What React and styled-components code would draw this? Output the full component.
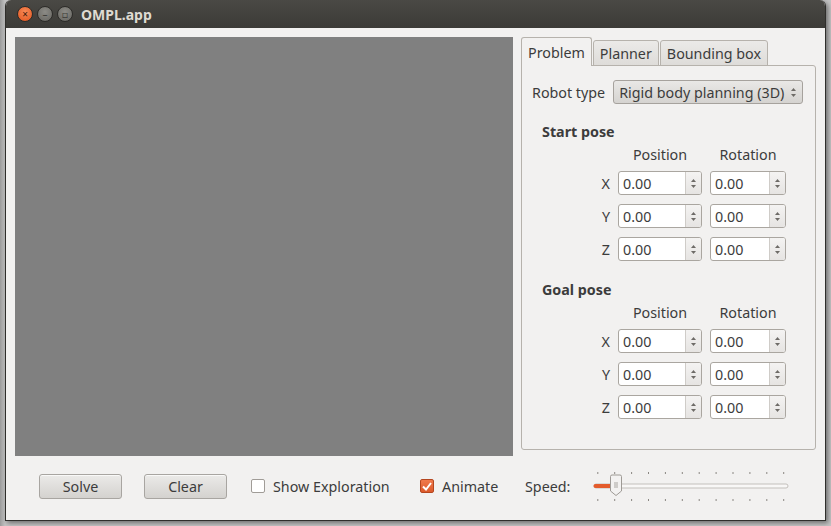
import React from 'react';
import styled, { createGlobalStyle } from 'styled-components';

const Global = createGlobalStyle`
  html, body {
    margin: 0;
    padding: 0;
    background: #b9b9b9;
    font-family: "Noto Sans", "DejaVu Sans", sans-serif;
  }
`;

const Screen = styled.div`
  width: 831px;
  height: 526px;
  overflow: hidden;
  background: linear-gradient(90deg, #9a9a9a 0px, #c4c4c4 5px);
`;

const Window = styled.div`
  margin-left: 5px;
  width: 821px;
  height: 521px;
  box-sizing: border-box;
  display: flex;
  flex-direction: column;
  background: #f2f1f0;
  border: 1px solid #2f2e2b;
  border-top: none;
  border-radius: 6px 6px 0 0;
  box-shadow: 2px 2px 5px rgba(0, 0, 0, 0.45);
  overflow: hidden;
`;

const TitleBar = styled.div`
  height: 28px;
  flex: none;
  display: flex;
  align-items: center;
  padding-left: 11px;
  background: linear-gradient(#4a4945, #3c3b37);
`;

const WinButton = styled.span`
  width: 14px;
  height: 14px;
  border-radius: 50%;
  margin-right: 4px;
  display: flex;
  align-items: center;
  justify-content: center;
  font-size: 10px;
  line-height: 1;
  color: ${(p) => (p.$close ? '#3c1a0a' : '#3c3b37')};
  background: ${(p) =>
    p.$close
      ? 'radial-gradient(circle at 50% 35%, #f78a57, #e2541d)'
      : 'radial-gradient(circle at 50% 35%, #8c8b86, #65645f)'};
  border: 1px solid #2d2c29;
`;

const WinTitle = styled.span`
  margin-left: 4px;
  color: #dfdbd2;
  font-weight: bold;
  font-size: 14px;
`;

const Body = styled.div`
  flex: 1;
  display: flex;
  flex-direction: column;
  padding: 9px 9px 0 9px;
`;

const MainRow = styled.div`
  display: flex;
  gap: 8px;
`;

const Viewport = styled.div`
  width: 498px;
  height: 419px;
  background: #808080;
`;

const TabWidget = styled.div`
  width: 295px;
  display: flex;
  flex-direction: column;
`;

const TabBar = styled.div`
  display: flex;
  align-items: flex-end;
  height: 29px;
  position: relative;
  z-index: 1;
`;

const Tab = styled.div`
  box-sizing: border-box;
  height: ${(p) => (p.$active ? '29px' : '26px')};
  padding: 0 6px;
  margin-right: 1px;
  display: flex;
  align-items: center;
  font-size: 14.3px;
  color: #3c3c3c;
  border: 1px solid #b6b2ac;
  border-bottom: ${(p) => (p.$active ? 'none' : '1px solid #b6b2ac')};
  border-radius: 3px 3px 0 0;
  background: ${(p) => (p.$active ? '#f2f1f0' : 'linear-gradient(#ebeae8, #dedcd9)')};
`;

const Panel = styled.div`
  box-sizing: border-box;
  height: 385px;
  margin-top: -1px;
  border: 1px solid #b6b2ac;
  border-radius: 0 3px 3px 3px;
  background: #f2f1f0;
  padding: 14px 12px 0 10px;
`;

const RobotRow = styled.div`
  display: flex;
  align-items: center;
  gap: 8px;
  font-size: 14.3px;
  color: #3c3c3c;
`;

const Combo = styled.div`
  flex: 1;
  box-sizing: border-box;
  height: 24px;
  display: flex;
  align-items: center;
  justify-content: space-between;
  padding: 0 6px 0 5px;
  border: 1px solid #a6a29d;
  border-radius: 3px;
  background: linear-gradient(#e9e8e6, #d5d3d0);
  font-size: 14.3px;
  color: #3c3c3c;
`;

const SectionTitle = styled.div`
  margin: ${(p) => p.$top}px 0 0 10px;
  height: 18px;
  line-height: 18px;
  font-size: 14.3px;
  font-weight: bold;
  color: #3c3c3c;
`;

const PoseGrid = styled.div`
  display: grid;
  grid-template-columns: auto 84px 76px;
  column-gap: 8px;
  row-gap: 9px;
  justify-content: end;
  align-items: center;
  padding-right: 17px;
  margin-top: 5px;
  font-size: 14.3px;
  color: #3c3c3c;
`;

const Header = styled.div`
  text-align: center;
  height: 18px;
  line-height: 18px;
  margin-bottom: -2px;
`;

const AxisLabel = styled.div`
  text-align: right;
`;

const Spin = styled.div`
  box-sizing: border-box;
  height: 24px;
  display: flex;
  border: 1px solid #aaa6a0;
  border-radius: 3px;
  background: #fff;
  overflow: hidden;
`;

const SpinValue = styled.div`
  flex: 1;
  display: flex;
  align-items: center;
  padding-left: 4px;
  font-size: 14.3px;
  color: #3c3c3c;
`;

const SpinButtons = styled.div`
  width: 15px;
  border-left: 1px solid #cfccc8;
  background: linear-gradient(#f4f3f2, #e6e4e2);
  display: flex;
  flex-direction: column;
  align-items: center;
  justify-content: center;
  gap: 3px;
`;

const BottomRow = styled.div`
  display: flex;
  align-items: center;
  margin-top: 14px;
  padding-left: 24px;
  font-size: 14.3px;
  color: #3c3c3c;
`;

const Button = styled.div`
  box-sizing: border-box;
  width: 83px;
  height: 25px;
  margin-right: ${(p) => p.$gap}px;
  display: flex;
  align-items: center;
  justify-content: center;
  border: 1px solid #a8a5a1;
  border-radius: 3px;
  background: linear-gradient(#ebeae8, #d4d2cf);
  box-shadow: inset 0 1px 0 rgba(255, 255, 255, 0.7);
`;

const Check = styled.span`
  box-sizing: border-box;
  width: 14px;
  height: 14px;
  margin-right: 8px;
  border-radius: 2px;
  display: inline-flex;
  align-items: center;
  justify-content: center;
  border: 1px solid ${(p) => (p.$on ? '#b4461f' : '#a09c97')};
  background: ${(p) => (p.$on ? 'linear-gradient(#f07a4c, #dc5a2b)' : '#fff')};
`;

const CheckLabel = styled.span`
  width: ${(p) => p.$w}px;
  white-space: nowrap;
`;

const SpeedLabel = styled.span`
  width: 68px;
`;

const Arrows = () => (
  <>
    <svg width="5" height="3" viewBox="0 0 5 3"><path d="M0 3 L2.5 0 L5 3Z" fill="#6e6b67" /></svg>
    <svg width="5" height="3" viewBox="0 0 5 3"><path d="M0 0 L2.5 3 L5 0Z" fill="#6e6b67" /></svg>
  </>
);

const ComboArrows = styled.span`
  display: flex;
  flex-direction: column;
  gap: 3px;
`;

const SpinBox = ({ value }) => (
  <Spin>
    <SpinValue>{value}</SpinValue>
    <SpinButtons>
      <Arrows />
    </SpinButtons>
  </Spin>
);

const PoseSection = ({ title, top }) => (
  <>
    <SectionTitle $top={top}>{title}</SectionTitle>
    <PoseGrid>
      <span />
      <Header>Position</Header>
      <Header>Rotation</Header>
      {['X', 'Y', 'Z'].map((axis) => (
        <React.Fragment key={axis}>
          <AxisLabel>{axis}</AxisLabel>
          <SpinBox value="0.00" />
          <SpinBox value="0.00" />
        </React.Fragment>
      ))}
    </PoseGrid>
  </>
);

const ticks = Array.from({ length: 12 }, (_, i) => 4.3 + i * 16.9);

const Slider = () => (
  <svg width="196" height="32" viewBox="0 0 196 32">
    {ticks.map((x) => (
      <g key={x} fill="#8a8782">
        <rect x={x} y="2" width="1" height="2" />
        <rect x={x} y="29" width="1" height="2" />
      </g>
    ))}
    <rect x="1" y="14" width="194" height="4" rx="2" fill="#f8f7f6" stroke="#c3c0bc" />
    <rect x="0.5" y="14" width="20" height="4" rx="2" fill="#e45c2c" />
    <path d="M17.5 6.5 Q17.5 5 19 5 L27 5 Q28.5 5 28.5 6.5 L28.5 21 L23 25.5 L17.5 21 Z" fill="#f3f2f1" stroke="#9e9a95" />
    <g stroke="#a9a6a1">
      <line x1="21" y1="13" x2="25" y2="13" />
      <line x1="21" y1="15" x2="25" y2="15" />
      <line x1="21" y1="17" x2="25" y2="17" />
    </g>
  </svg>
);

export default function App() {
  return (
    <>
      <Global />
      <Screen>
        <Window>
          <TitleBar>
            <WinButton $close>×</WinButton>
            <WinButton>–</WinButton>
            <WinButton>▫</WinButton>
            <WinTitle>OMPL.app</WinTitle>
          </TitleBar>
          <Body>
            <MainRow>
              <Viewport />
              <TabWidget>
                <TabBar>
                  <Tab $active>Problem</Tab>
                  <Tab>Planner</Tab>
                  <Tab>Bounding box</Tab>
                </TabBar>
                <Panel>
                  <RobotRow>
                    <span>Robot type</span>
                    <Combo>
                      <span>Rigid body planning (3D)</span>
                      <ComboArrows>
                        <Arrows />
                      </ComboArrows>
                    </Combo>
                  </RobotRow>
                  <PoseSection title="Start pose" top={19} />
                  <PoseSection title="Goal pose" top={20} />
                </Panel>
              </TabWidget>
            </MainRow>
            <BottomRow>
              <Button $gap={22}>Solve</Button>
              <Button $gap={24}>Clear</Button>
              <Check />
              <CheckLabel $w={147}>Show Exploration</CheckLabel>
              <Check $on>
                <svg width="10" height="9" viewBox="0 0 10 9">
                  <path d="M1 4.5 L4 7.5 L9 1" fill="none" stroke="#fff" strokeWidth="2" />
                </svg>
              </Check>
              <CheckLabel $w={83}>Animate</CheckLabel>
              <SpeedLabel>Speed:</SpeedLabel>
              <Slider />
            </BottomRow>
          </Body>
        </Window>
      </Screen>
    </>
  );
}
